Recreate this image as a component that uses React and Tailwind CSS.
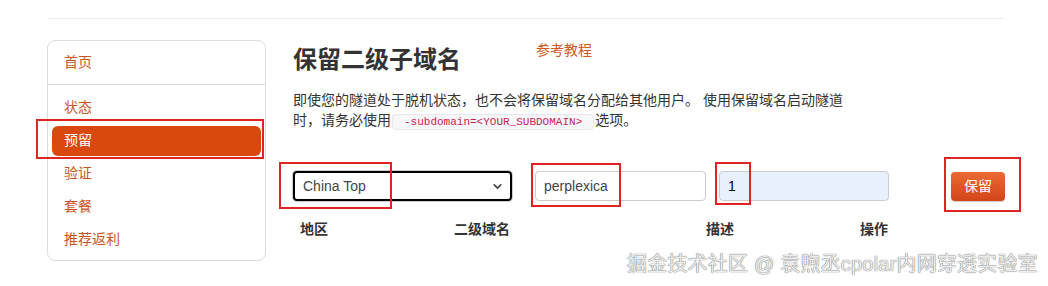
import React from "react";
import { ChevronDown } from "lucide-react";

const navItems = [
  { label: "状态" },
  { label: "预留", active: true },
  { label: "验证" },
  { label: "套餐" },
  { label: "推荐返利" },
];

// red annotation boxes drawn over the screenshot
const marks = [
  "left-[36px] top-[119px] w-[228px] h-[40px]",
  "left-[279px] top-[162px] w-[113px] h-[47px]",
  "left-[531px] top-[163px] w-[90px] h-[44px]",
  "left-[715px] top-[162px] w-[36px] h-[43px]",
  "left-[944px] top-[157px] w-[77px] h-[55px]",
];

export default function App() {
  return (
    <div className="relative w-[1048px] h-[286px] overflow-hidden bg-white pt-[18px] pl-[47px] font-['Liberation_Sans','Noto_Sans_CJK_SC',sans-serif] text-[#333]">
      <div className="ml-[1px] w-[956px] border-t border-[#eeeeee]" />

      <div className="mt-[21px] flex">
        {/* Sidebar */}
        <div className="w-[219px] rounded-[8px] border border-[#dddddd] pt-[5px] pb-[4px]">
          <div className="mx-[4px] flex h-[32px] items-center px-[12px] text-[14px] text-[#c9541f]">
            首页
          </div>
          <div className="my-[6px] border-t border-[#dddddd]" />
          {navItems.map((item) => (
            <div key={item.label} className="mx-[4px] flex h-[33px] items-center">
              <div
                className={`flex h-[30px] w-full items-center rounded-[6px] px-[12px] text-[14px] ${
                  item.active ? "bg-[#d9480f] text-white" : "text-[#c9541f]"
                }`}
              >
                {item.label}
              </div>
            </div>
          ))}
        </div>

        {/* Main */}
        <div className="ml-[27px] flex flex-col">
          <div className="flex items-start">
            <h1 className="mt-[5px] text-[24px] leading-[30px] font-bold text-[#333]">
              保留二级子域名
            </h1>
            <a className="ml-[75px] text-[14px] leading-[20px] text-[#d0581f]">参考教程</a>
          </div>

          <p className="mt-[15px] text-[14px] leading-[20px] text-[#333]">
            即使您的隧道处于脱机状态，也不会将保留域名分配给其他用户。 使用保留域名启动隧道
            <br />
            时，请务必使用
            <code className="mx-[1px] rounded-[4px] border border-[#e8e8ee] bg-[#f7f7f9] px-[11px] py-[1px] font-['Liberation_Mono',monospace] text-[11px] leading-[16px] text-[#c7254e]">
              -subdomain=&lt;YOUR_SUBDOMAIN&gt;
            </code>
            选项。
          </p>

          <div className="mt-[41px] flex items-center">
            <div className="flex h-[30px] w-[219px] items-center justify-between rounded-[4px] border-2 border-black pl-[8px] pr-[6px] text-[14px] text-[#444] ring-1 ring-[#cccccc]">
              <span>China Top</span>
              <ChevronDown size={13} strokeWidth={3} className="text-[#444]" />
            </div>
            <div className="ml-[23px] flex h-[30px] w-[171px] items-center rounded-[4px] border border-[#cccccc] px-[8px] text-[14px] text-[#444]">
              perplexica
            </div>
            <div className="ml-[13px] flex h-[30px] w-[170px] items-center rounded-[4px] border border-[#cccccc] bg-[#e8f0fe] px-[8px] text-[14px] text-black">
              1
            </div>
            <button className="ml-[62px] h-[29px] w-[54px] rounded-[4px] bg-gradient-to-b from-[#ea6a33] to-[#d2441a] text-[14px] text-white shadow-[0_1px_1px_rgba(0,0,0,0.2)]">
              保留
            </button>
          </div>

          <div className="mt-[18px] flex pl-[7px] text-[14px] leading-[20px] font-bold text-[#333]">
            <span className="w-[154px]">地区</span>
            <span className="w-[252px]">二级域名</span>
            <span className="w-[154px]">描述</span>
            <span>操作</span>
          </div>
        </div>
      </div>

      {marks.map((m) => (
        <div key={m} className={`absolute border-2 border-[#e02424] ${m}`} />
      ))}

      <div className="absolute left-[627px] top-[250px] text-[20px] leading-[28px] tracking-[0.2px] text-[#ececec] [text-shadow:0_0_1px_#777,0_0_1px_#777]">
        掘金技术社区 @ 袁煦丞cpolar内网穿透实验室
      </div>
    </div>
  );
}
